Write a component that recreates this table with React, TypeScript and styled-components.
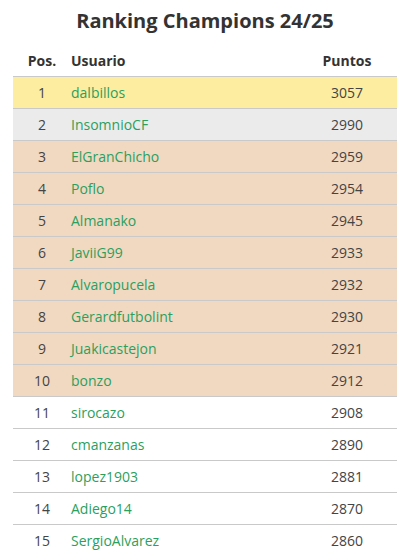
import styled, { createGlobalStyle } from "styled-components";

const GlobalStyle = createGlobalStyle`
  body {
    margin: 0;
    background: #fff;
    font-family: "Open Sans", "Liberation Sans", sans-serif;
  }
`;

type Tier = "gold" | "silver" | "top" | "plain";

const Page = styled.div`
  padding: 7px 13px 0;
`;

const Title = styled.h2`
  margin: 0 0 10px;
  font-size: 20px;
  line-height: 28px;
  font-weight: 700;
  color: #333;
  text-align: center;
`;

const Table = styled.table`
  width: 100%;
  border-collapse: collapse;
  font-size: 14px;
  table-layout: fixed;
`;

const HeadCell = styled.th<{ $align: string }>`
  height: 31px;
  padding: 0;
  font-weight: 700;
  color: #333;
  text-align: ${(p) => p.$align};
  border-bottom: 1px solid #c9c9c9;
`;

const rowBg: Record<Tier, string> = {
  gold: "#fdeda0",
  silver: "#ebebeb",
  top: "#f1d9c1",
  plain: "#ffffff",
};

const Row = styled.tr<{ $tier: Tier }>`
  background: ${(p) => rowBg[p.$tier]};
`;

const Cell = styled.td<{ $align: string }>`
  height: 31px;
  padding: 0;
  color: #444;
  text-align: ${(p) => p.$align};
  border-bottom: 1px solid #c9c9c9;
`;

const UserLink = styled.a`
  color: #2b9f5e;
  text-decoration: none;
`;

const data: [string, number][] = [
  ["dalbillos", 3057],
  ["InsomnioCF", 2990],
  ["ElGranChicho", 2959],
  ["Poflo", 2954],
  ["Almanako", 2945],
  ["JaviiG99", 2933],
  ["Alvaropucela", 2932],
  ["Gerardfutbolint", 2930],
  ["Juakicastejon", 2921],
  ["bonzo", 2912],
  ["sirocazo", 2908],
  ["cmanzanas", 2890],
  ["lopez1903", 2881],
  ["Adiego14", 2870],
  ["SergioAlvarez", 2860],
];

const tierOf = (pos: number): Tier =>
  pos === 1 ? "gold" : pos === 2 ? "silver" : pos <= 10 ? "top" : "plain";

export default function App() {
  return (
    <Page>
      <GlobalStyle />
      <Title>Ranking Champions 24/25</Title>
      <Table>
        <colgroup>
          <col style={{ width: 58 }} />
          <col />
          <col style={{ width: 100 }} />
        </colgroup>
        <thead>
          <tr>
            <HeadCell $align="center">Pos.</HeadCell>
            <HeadCell $align="left">Usuario</HeadCell>
            <HeadCell $align="center">Puntos</HeadCell>
          </tr>
        </thead>
        <tbody>
          {data.map(([user, pts], i) => (
            <Row key={user} $tier={tierOf(i + 1)}>
              <Cell $align="center">{i + 1}</Cell>
              <Cell $align="left">
                <UserLink href="#">{user}</UserLink>
              </Cell>
              <Cell $align="center">{pts}</Cell>
            </Row>
          ))}
        </tbody>
      </Table>
    </Page>
  );
}
